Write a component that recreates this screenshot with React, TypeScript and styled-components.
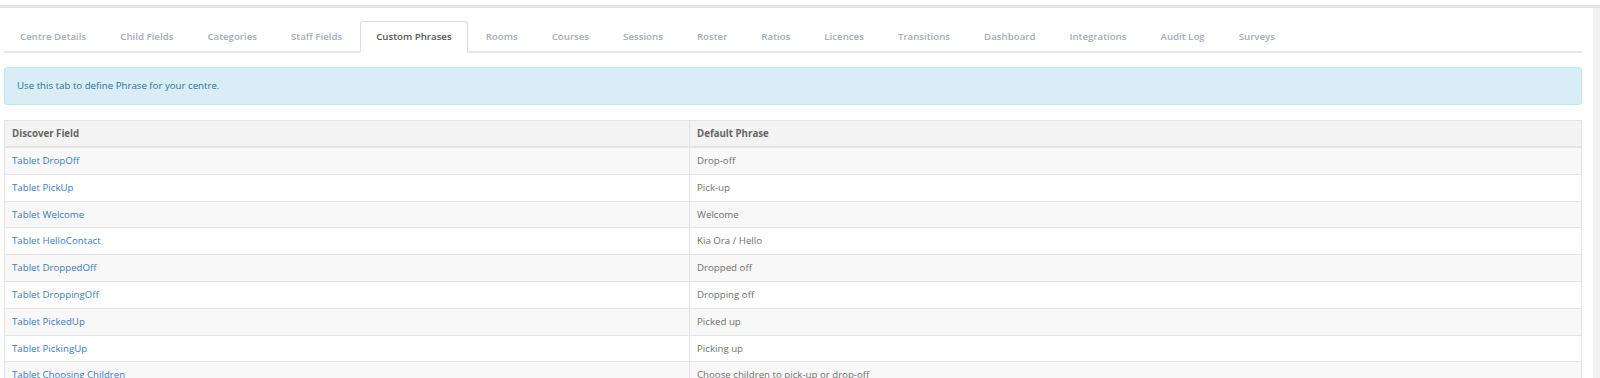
import React from "react";
import styled, { createGlobalStyle } from "styled-components";

const Global = createGlobalStyle`
  html, body { margin: 0; padding: 0; background: #fff; }
  body { font-family: "Open Sans", "Noto Sans", sans-serif; font-size: 9.7px; color: #666; }
  * { box-sizing: border-box; }
`;

const Page = styled.div`
  display: flex;
  flex-direction: column;
  padding-top: 5px;
  height: 378px;
  overflow: hidden;
`;

const TopBar = styled.div`
  flex-shrink: 0;
  height: 3px;
  background: #e4e4e6;
`;

const Body = styled.div`
  display: flex;
  flex: 1;
  min-height: 0;
`;

const Main = styled.div`
  flex: 1;
  padding: 13px 11px 0 4px;
`;

const ScrollStrip = styled.div`
  width: 7px;
  background: #f1f1f1;
`;

const Tabs = styled.ul`
  display: flex;
  list-style: none;
  margin: 0;
  padding: 0;
  border-bottom: 2px solid #e6e6e6;
`;

const Tab = styled.li<{ $active?: boolean }>`
  margin: 0 2px -2px 0;
  padding: 7px 15px 6px;
  line-height: 16px;
  font-size: 9.7px;
  font-weight: 600;
  border: 1px solid ${(p) => (p.$active ? "#dcdcdc" : "transparent")};
  border-bottom: 2px solid ${(p) => (p.$active ? "#fff" : "transparent")};
  border-radius: 3px 3px 0 0;
  background: ${(p) => (p.$active ? "#fff" : "transparent")};
  color: ${(p) => (p.$active ? "#555" : "#a4adbd")};
  white-space: nowrap;
`;

const Alert = styled.div`
  margin-top: 14px;
  padding: 11px 12px;
  line-height: 14px;
  font-size: 9.7px;
  background: #d9edf7;
  border: 1px solid #bce8f1;
  border-radius: 3px;
  color: #31708f;
`;

const Table = styled.table`
  margin-top: 15px;
  width: 100%;
  border-collapse: collapse;
  table-layout: fixed;
  font-size: 9.7px;
`;

const Th = styled.th<{ $w?: string }>`
  ${(p) => (p.$w ? `width: ${p.$w};` : "")}
  text-align: left;
  font-weight: 700;
  color: #666;
  background: #f3f3f3;
  border: 1px solid #e4e4e4;
  border-bottom: 2px solid #e4e4e4;
  padding: 5px 7px;
  line-height: 15px;
`;

const Tr = styled.tr<{ $odd: boolean }>`
  background: ${(p) => (p.$odd ? "#f8f8f8" : "#fff")};
`;

const Td = styled.td`
  border: 1px solid #e4e4e4;
  padding: 5px 7px;
  line-height: 15.8px;
  color: #707070;
`;

const FieldLink = styled.a`
  color: #3a7cc0;
  text-decoration: none;
`;

const tabs = [
  "Centre Details",
  "Child Fields",
  "Categories",
  "Staff Fields",
  "Custom Phrases",
  "Rooms",
  "Courses",
  "Sessions",
  "Roster",
  "Ratios",
  "Licences",
  "Transitions",
  "Dashboard",
  "Integrations",
  "Audit Log",
  "Surveys",
];

const rows: [string, string][] = [
  ["Tablet DropOff", "Drop-off"],
  ["Tablet PickUp", "Pick-up"],
  ["Tablet Welcome", "Welcome"],
  ["Tablet HelloContact", "Kia Ora / Hello"],
  ["Tablet DroppedOff", "Dropped off"],
  ["Tablet DroppingOff", "Dropping off"],
  ["Tablet PickedUp", "Picked up"],
  ["Tablet PickingUp", "Picking up"],
  ["Tablet Choosing Children", "Choose children to pick-up or drop-off"],
  ["Tablet Signature", "Signature"],
];

export default function App() {
  return (
    <>
      <Global />
      <Page>
        <TopBar />
        <Body>
          <Main>
            <Tabs>
              {tabs.map((t) => (
                <Tab key={t} $active={t === "Custom Phrases"}>
                  {t}
                </Tab>
              ))}
            </Tabs>
            <Alert>Use this tab to define Phrase for your centre.</Alert>
            <Table>
              <thead>
                <tr>
                  <Th $w="685px">Discover Field</Th>
                  <Th>Default Phrase</Th>
                </tr>
              </thead>
              <tbody>
                {rows.map(([f, p], i) => (
                  <Tr key={f} $odd={i % 2 === 0}>
                    <Td>
                      <FieldLink href="#">{f}</FieldLink>
                    </Td>
                    <Td>{p}</Td>
                  </Tr>
                ))}
              </tbody>
            </Table>
          </Main>
          <ScrollStrip />
        </Body>
      </Page>
    </>
  );
}
